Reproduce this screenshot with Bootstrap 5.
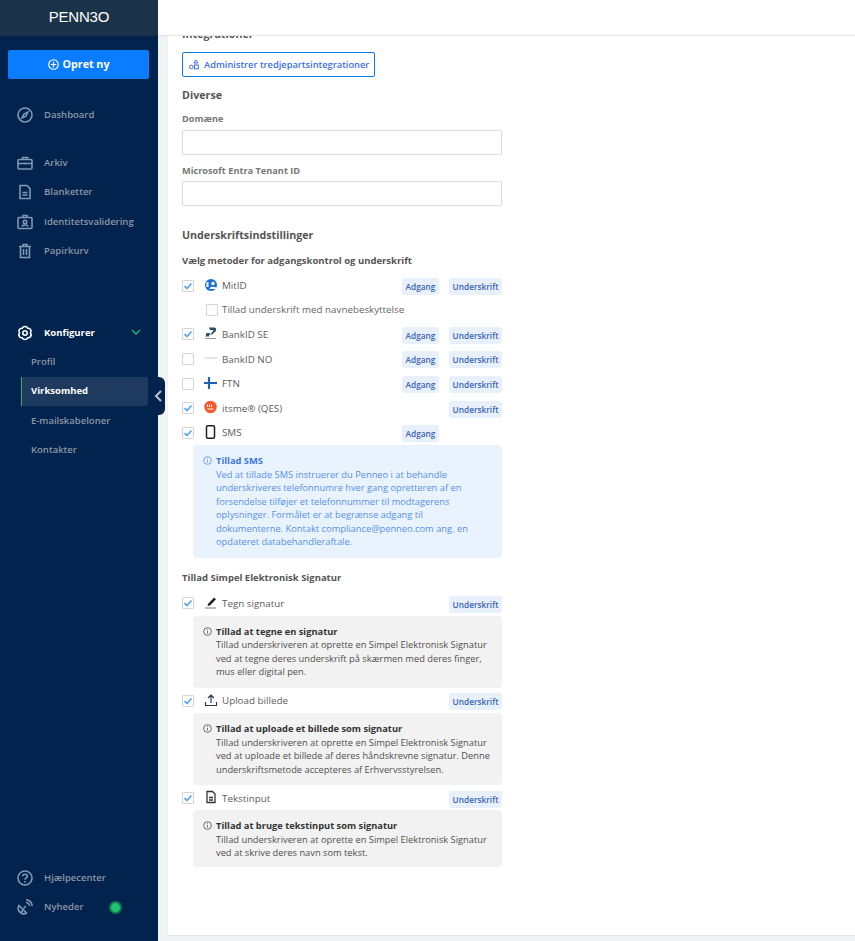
<!DOCTYPE html>
<html lang="da">
<head>
<meta charset="utf-8">
<title>Penneo</title>
<link href="https://cdn.jsdelivr.net/npm/bootstrap@5.3.0/dist/css/bootstrap.min.css" rel="stylesheet">
<style>
html,body{height:941px;overflow:hidden}
body{font-family:"Open Sans","Liberation Sans",sans-serif;font-size:10px;background:#f2f3f7;color:#555}
.shell{height:941px}
.side{width:158px;background:#01234d;flex:none;position:relative}
.brand{height:36px;background:#1b3349;color:#fff;font-family:"Liberation Sans",sans-serif;font-size:15px;letter-spacing:-.2px;line-height:34px;text-align:center}
.newbtn{display:flex;align-items:center;justify-content:center;gap:4px;margin:14px 9px 0 8px;height:29px;background:#0a7cff;color:#fff;border:0;border-radius:2px;font-weight:700;font-size:10.7px;width:141px;padding:0}
.navi{display:flex;align-items:center;height:29.33px;color:#8d97a6;font-weight:600;font-size:9.5px;padding-left:17px}
.navi svg{width:16px;height:16px;margin-right:11px;flex:none;fill:none;stroke:#7f98b3;stroke-width:1.6}
.navi.cfg{color:#fff;font-weight:700;height:28.4px}
.navi.cfg svg{stroke:#fff}
.subi{display:flex;align-items:center;height:29.5px;margin-left:21px;padding-left:10px;width:127px;color:#8d97a6;font-weight:600;font-size:9.5px}
.subi.on{background:#1e3a5f;color:#fff;font-weight:700;border-left:1px solid #1fb36b;padding-left:9px;border-radius:0 2px 2px 0}
.g1{margin-top:21px}.g2{margin-top:19px}.g3{margin-top:53px}
.dot{width:13px;height:13px;border-radius:50%;background:#1fc46f;border:2px solid #0d7d50;margin-left:25px}
.handle{position:absolute;left:158px;top:377px;width:7px;height:38px;background:#01234d;border-radius:0 6px 6px 0}
.chev{position:absolute;left:-4px;top:13px;width:9px;height:12px;fill:none;stroke:#b8c2cf;stroke-width:2}
.mainc{min-width:0}
.topb{height:36px;background:#fff;border-bottom:1px solid #e2e2e2;flex:none}
.sheet{margin:0 0 6px 10px;background:#fff;overflow:hidden;box-shadow:0 1px 1px #e4e5e9}
.inner{margin-top:-11px;padding-left:14px;width:334px}
.h-int{font-size:10.7px;font-weight:700;color:#555;line-height:18px;height:18px}
.intbtn{display:flex;align-items:center;gap:5px;margin-top:9px;width:193px;height:25px;border:1px solid #0a7cf0;border-radius:2px;background:#fff;color:#3d6fe6;font-size:9.3px;font-weight:600;padding:0 0 0 6px;white-space:nowrap}
.h-sec{font-size:10.7px;font-weight:700;color:#555;line-height:16px}
.flabel{font-size:9.2px;font-weight:700;color:#777;line-height:13px;margin-bottom:5px}
.finput{display:block;width:320px;height:25px;border:1px solid #dcdcdc;border-radius:1px;background:#fff;padding:0}
.h-sub{font-size:9.5px;font-weight:700;color:#555;line-height:13px}
.mrow{display:flex;align-items:center;height:24.6px;width:320px}
.mrow .form-check-input,.subrow .form-check-input{margin:0;width:12px;height:12px;border:1px solid #d4d4d4;border-radius:1px;flex:none;background-color:#fff;box-shadow:none}
.mrow .form-check-input:checked{background-color:#fff;border-color:#d4d4d4;background-image:url("data:image/svg+xml,%3csvg xmlns='http://www.w3.org/2000/svg' viewBox='0 0 12 12'%3e%3cpath fill='none' stroke='%235aa8f5' stroke-width='1.8' d='M2.5 6.2 5 8.5l4.5-5'/%3e%3c/svg%3e");background-size:12px}
.mic{width:14px;height:14px;margin:0 4px 0 10px;flex:none;position:relative;top:-1px}
.mname{color:#5c5c5c;font-size:9.8px;position:relative;top:1px}
.tags{margin-left:auto;display:flex;gap:10px;align-items:center;position:relative;top:1px}
.tagx{display:block;height:17px;line-height:17px;background:#e8f1fb;color:#3a62b4;font-size:8.3px;font-weight:600;border-radius:2px;text-align:center}
.t-a{width:37px}.t-u{width:53px}
.t-gap{width:37px}
.subrow{display:flex;align-items:center;gap:4px;height:24px;padding-left:24px;color:#666;font-size:9.8px}
.infob{display:flex;gap:4px;margin-left:11px;width:309px;padding:9px 10px 9px 10px;border-radius:4px;line-height:13.5px;font-size:9.3px}
.infob svg{width:9px;height:9px;flex:none;margin-top:2px}
.infob b{display:block;font-weight:700}
.ib-blue{background:#e8f3fe;color:#5a90e8}
.ib-blue b{color:#3c77de}
.ib-gray{background:#f2f2f2;color:#4f4f4f;margin-bottom:.8px}
.ib-gray b{color:#333}
.ib-last{padding-bottom:7px}
</style>
</head>
<body>
<div class="shell d-flex">
  <aside class="side d-flex flex-column">
    <div class="brand">PENN3O</div>
    <button class="newbtn" type="button"><svg width="11" height="11" viewBox="0 0 12 12" fill="none" stroke="#fff" stroke-width="1.3"><circle cx="6" cy="6" r="5.2"/><path d="M6 3v6M3 6h6"/></svg>Opret ny</button>
    <div class="navi g1"><svg viewBox="0 0 16 16"><circle cx="8" cy="8" r="7"/><path d="M11 5 9 9 5 11l2-4z"/></svg>Dashboard</div>
    <div class="navi g2"><svg viewBox="0 0 16 16"><rect x="1" y="4.5" width="14" height="9.5" rx="1"/><path d="M5.5 4.500V2.500h5v2M1 8.500h14M8 7.500v2"/></svg>Arkiv</div>
    <div class="navi"><svg viewBox="0 0 16 16"><path d="M3 1.500h7l3 3V14.500H3zM5.500 8.500h5M5.500 11h5"/></svg>Blanketter</div>
    <div class="navi"><svg viewBox="0 0 16 16"><rect x="1" y="3.500" width="14" height="11" rx="1"/><circle cx="8" cy="8" r="1.700"/><path d="M5 12.500c.5-2 5.500-2 6 0M6 3.500V1.500h4v2"/></svg>Identitetsvalidering</div>
    <div class="navi"><svg viewBox="0 0 16 16"><path d="M2 3.500h12M6 3.500V1.500h4v2M3.500 3.500v11h9v-11M6.500 6v6M9.500 6v6"/></svg>Papirkurv</div>
    <div class="navi cfg g3"><svg viewBox="0 0 16 16"><circle cx="8" cy="8" r="2.200"/><path d="M13.500 8A3 3 0 0 1 10.750 12.760 3 3 0 0 1 5.250 12.760 3 3 0 0 1 2.500 8 3 3 0 0 1 5.250 3.240 3 3 0 0 1 10.750 3.240 3 3 0 0 1 13.500 8z"/></svg>Konfigurer<svg style="width:10px;height:7px;margin:0 0 0 36px;stroke:#1fa866" viewBox="0 0 10 7"><path d="M1 1l4 4 4-4"/></svg></div>
    <div class="subi">Profil</div>
    <div class="subi on">Virksomhed</div>
    <div class="subi">E-mailskabeloner</div>
    <div class="subi">Kontakter</div>
    <div class="navi mt-auto"><svg viewBox="0 0 16 16"><circle cx="8" cy="8" r="7"/><path d="M5.800 6.200C5.800 3.500 10.300 3.500 10.300 6.200 10.300 8 8 7.800 8 9.800M8 11v1.500"/></svg>Hjælpecenter</div>
    <div class="navi" style="margin-bottom:19px"><svg viewBox="0 0 16 16"><path d="M2 6.500l7.500 7.500a5.500 5.500 0 0 1-7.500-7.500zM6.500 9.500 9 7M6 11l-2.500 3.500M9 3.500a3.500 3.500 0 0 1 3.500 3.500M9 .8a6.200 6.200 0 0 1 6.200 6.200"/></svg>Nyheder<span class="dot"></span></div>
    <div class="handle"><svg class="chev" viewBox="0 0 9 12"><path d="M7 1 2 6l5 5"/></svg></div>
  </aside>
  <div class="mainc flex-grow-1 d-flex flex-column">
    <div class="topb"></div>
    <div class="sheet flex-grow-1">
      <div class="inner">
        <div class="h-int">Integrationer</div>
        <button class="intbtn" type="button"><svg width="10" height="11" viewBox="0 0 10 11" fill="none" stroke="#3d6fe6" stroke-width="1"><path d="M6.800.8 8.800 4H4.800z"/><circle cx="2.300" cy="8" r="1.800"/><rect x="5.500" y="6" width="3.800" height="3.800"/></svg>Administrer tredjepartsintegrationer</button>
        <div class="h-sec" style="margin-top:10px">Diverse</div>
        <div class="flabel" style="margin-top:9px">Domæne</div>
        <input class="finput" type="text" aria-label="Domæne">
        <div class="flabel" style="margin-top:9px;margin-bottom:4px">Microsoft Entra Tenant ID</div>
        <input class="finput" type="text" aria-label="Microsoft Entra Tenant ID">
        <div class="h-sec" style="margin-top:21px">Underskriftsindstillinger</div>
        <div class="h-sub" style="margin-top:11px;margin-bottom:6.5px">Vælg metoder for adgangskontrol og underskrift</div>

        <div class="mrow"><input class="form-check-input" type="checkbox" checked aria-label="MitID"><svg class="mic" viewBox="0 0 14 14"><circle cx="7" cy="7" r="6" fill="#1c6fd8"/><circle cx="9" cy="5.500" r="1.700" fill="#fff"/><path d="M5.500 11c0-3 7-3 7 0z" fill="#fff"/><rect x="2.500" y="4" width="2" height="5" fill="#fff"/></svg><span class="mname">MitID</span><span class="tags"><span class="tagx t-a">Adgang</span><span class="tagx t-u">Underskrift</span></span></div>
        <div class="subrow"><input class="form-check-input" type="checkbox" aria-label="Tillad underskrift med navnebeskyttelse"><span>Tillad underskrift med navnebeskyttelse</span></div>
        <div class="mrow"><input class="form-check-input" type="checkbox" checked aria-label="BankID SE"><svg class="mic" viewBox="0 0 14 14"><path d="M5 1.500h5.500c2 0 2 3 .5 4.500l-3 2.500H6l2.500-2.500 1-2H6zM2.500 7h3.500l-1 3.500H1.500z" fill="#2d4a66"/><rect x="1" y="12" width="11" height="1" fill="#8a9aa8"/></svg><span class="mname">BankID SE</span><span class="tags"><span class="tagx t-a">Adgang</span><span class="tagx t-u">Underskrift</span></span></div>
        <div class="mrow"><input class="form-check-input" type="checkbox" aria-label="BankID NO"><svg class="mic" viewBox="0 0 14 14"><path d="M1 7h12" stroke="#b9b3bd" stroke-width="1.200" stroke-dasharray="1 .4"/></svg><span class="mname">BankID NO</span><span class="tags"><span class="tagx t-a">Adgang</span><span class="tagx t-u">Underskrift</span></span></div>
        <div class="mrow"><input class="form-check-input" type="checkbox" aria-label="FTN"><svg class="mic" viewBox="0 0 14 14"><path d="M0 7h13M5 1v12" stroke="#1d62b8" stroke-width="2.200"/></svg><span class="mname">FTN</span><span class="tags"><span class="tagx t-a">Adgang</span><span class="tagx t-u">Underskrift</span></span></div>
        <div class="mrow"><input class="form-check-input" type="checkbox" checked aria-label="itsme"><svg class="mic" viewBox="0 0 14 14"><circle cx="6.500" cy="7" r="6.200" fill="#f4582b"/><path d="M3.500 4.500v2.500M5.500 4.500v2.500M7.500 4.500v2.500M3.500 9h6" stroke="#fff" stroke-width="1"/></svg><span class="mname">itsme® (QES)</span><span class="tags"><span class="t-gap"></span><span class="tagx t-u">Underskrift</span></span></div>
        <div class="mrow"><input class="form-check-input" type="checkbox" checked aria-label="SMS"><svg class="mic" viewBox="0 0 14 14"><rect x="2.500" y=".8" width="8" height="12.400" rx="1.200" fill="none" stroke="#222" stroke-width="1.500"/></svg><span class="mname">SMS</span><span class="tags"><span class="tagx t-a">Adgang</span><span class="t-u"></span></span></div>

        <div class="infob ib-blue"><svg viewBox="0 0 10 10" fill="none" stroke="currentColor" stroke-width=".9"><circle cx="5" cy="5" r="4.300"/><path d="M5 4.300v3M5 2.400v1"/></svg><div><b>Tillad SMS</b>Ved at tillade SMS instruerer du Penneo i at behandle underskriveres telefonnumre hver gang opretteren af en forsendelse tilføjer et telefonnummer til modtagerens oplysninger. Formålet er at begrænse adgang til dokumenterne. Kontakt compliance@penneo.com ang. en opdateret databehandleraftale.</div></div>

        <div class="h-sub" style="margin-top:13.5px;margin-bottom:7px">Tillad Simpel Elektronisk Signatur</div>

        <div class="mrow"><input class="form-check-input" type="checkbox" checked aria-label="Tegn signatur"><svg class="mic" viewBox="0 0 14 14"><path d="M4 9 10 2.500l2 1.700L6 10.500 3.500 11z" fill="#222"/><path d="M1 13h11" stroke="#777" stroke-width="1"/></svg><span class="mname">Tegn signatur</span><span class="tags"><span class="t-gap"></span><span class="tagx t-u">Underskrift</span></span></div>
        <div class="infob ib-gray"><svg viewBox="0 0 10 10" fill="none" stroke="currentColor" stroke-width=".9"><circle cx="5" cy="5" r="4.300"/><path d="M5 4.300v3M5 2.400v1"/></svg><div><b>Tillad at tegne en signatur</b>Tillad underskriveren at oprette en Simpel Elektronisk Signatur ved at tegne deres underskrift på skærmen med deres finger, mus eller digital pen.</div></div>

        <div class="mrow"><input class="form-check-input" type="checkbox" checked aria-label="Upload billede"><svg class="mic" viewBox="0 0 14 14" fill="none" stroke="#2b3a4a" stroke-width="1.200"><path d="M7 10V2M4 5l3-3 3 3M1.500 9v3.500h11V9"/></svg><span class="mname">Upload billede</span><span class="tags"><span class="t-gap"></span><span class="tagx t-u">Underskrift</span></span></div>
        <div class="infob ib-gray"><svg viewBox="0 0 10 10" fill="none" stroke="currentColor" stroke-width=".9"><circle cx="5" cy="5" r="4.300"/><path d="M5 4.300v3M5 2.400v1"/></svg><div><b>Tillad at uploade et billede som signatur</b>Tillad underskriveren at oprette en Simpel Elektronisk Signatur ved at uploade et billede af deres håndskrevne signatur. Denne underskriftsmetode accepteres af Erhvervsstyrelsen.</div></div>

        <div class="mrow"><input class="form-check-input" type="checkbox" checked aria-label="Tekstinput"><svg class="mic" viewBox="0 0 14 14"><path d="M3 1.500h5.500L11 4v8.500H3z" fill="none" stroke="#333" stroke-width="1.300"/><path d="M5 7.500h4M5 10h4" stroke="#333" stroke-width="1.300"/></svg><span class="mname">Tekstinput</span><span class="tags"><span class="t-gap"></span><span class="tagx t-u">Underskrift</span></span></div>
        <div class="infob ib-gray ib-last"><svg viewBox="0 0 10 10" fill="none" stroke="currentColor" stroke-width=".9"><circle cx="5" cy="5" r="4.300"/><path d="M5 4.300v3M5 2.400v1"/></svg><div><b>Tillad at bruge tekstinput som signatur</b>Tillad underskriveren at oprette en Simpel Elektronisk Signatur ved at skrive deres navn som tekst.</div></div>
      </div>
    </div>
  </div>
</div>
<script src="https://cdn.jsdelivr.net/npm/bootstrap@5.3.0/dist/js/bootstrap.bundle.min.js"></script>
</body>
</html>
